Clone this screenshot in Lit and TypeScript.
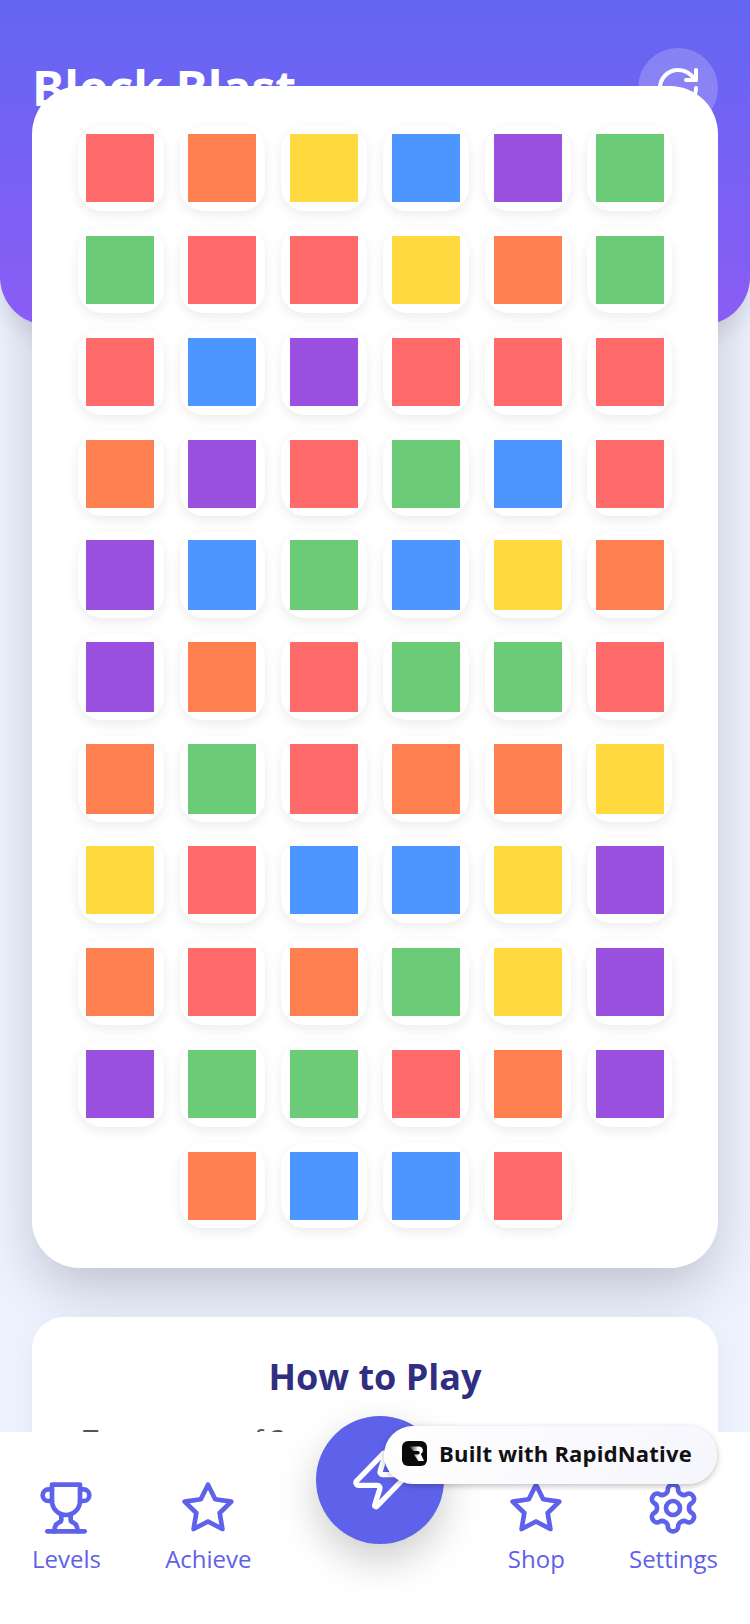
import { LitElement, html, css, svg } from 'lit';
import { customElement } from 'lit/decorators.js';
import { classMap } from 'lit/directives/class-map.js';

const COLORS: Record<string, string> = {
  R: '#ff6b6b',
  O: '#ff7f50',
  Y: '#ffd93d',
  B: '#4d96ff',
  P: '#9b51e0',
  G: '#6bcb77',
};

const ROWS = [
  'ROYBPG',
  'GRRYOG',
  'RBPRRR',
  'OPRGBR',
  'PBGBYO',
  'PORGGR',
  'OGROOY',
  'YRBBYP',
  'OROGYP',
  'PGGROP',
  'OBBR',
];

// these three rows come out a little taller in the reference
const TALL_ROWS = [4, 5, 6];

const trophy = svg`
  <path d="M6 9H4.5a2.5 2.5 0 0 1 0-5H6" />
  <path d="M18 9h1.5a2.5 2.5 0 0 0 0-5H18" />
  <path d="M4 22h16" />
  <path d="M10 14.66V17c0 .55-.47.98-.97 1.21C7.85 18.75 7 20.24 7 22" />
  <path d="M14 14.66V17c0 .55.47.98.97 1.21C16.15 18.75 17 20.24 17 22" />
  <path d="M18 2H6v7a6 6 0 0 0 12 0V2Z" />
`;

const star = svg`
  <polygon points="12 2 15.09 8.26 22 9.27 17 14.14 18.18 21.02 12 17.77 5.82 21.02 7 14.14 2 9.27 8.91 8.26 12 2" />
`;

const gear = svg`
  <path d="M12.22 2h-.44a2 2 0 0 0-2 2v.18a2 2 0 0 1-1 1.73l-.43.25a2 2 0 0 1-2 0l-.15-.08a2 2 0 0 0-2.73.73l-.22.38a2 2 0 0 0 .73 2.73l.15.1a2 2 0 0 1 1 1.72v.51a2 2 0 0 1-1 1.74l-.15.09a2 2 0 0 0-.73 2.73l.22.38a2 2 0 0 0 2.73.73l.15-.08a2 2 0 0 1 2 0l.43.25a2 2 0 0 1 1 1.73V20a2 2 0 0 0 2 2h.44a2 2 0 0 0 2-2v-.18a2 2 0 0 1 1-1.73l.43-.25a2 2 0 0 1 2 0l.15.08a2 2 0 0 0 2.73-.73l.22-.39a2 2 0 0 0-.73-2.73l-.15-.08a2 2 0 0 1-1-1.74v-.5a2 2 0 0 1 1-1.74l.15-.09a2 2 0 0 0 .73-2.73l-.22-.38a2 2 0 0 0-2.73-.73l-.15.08a2 2 0 0 1-2 0l-.43-.25a2 2 0 0 1-1-1.73V4a2 2 0 0 0-2-2z" />
  <circle cx="12" cy="12" r="3" />
`;

const zap = svg`
  <path d="M4 14a1 1 0 0 1-.78-1.63l9.9-10.2a.5.5 0 0 1 .86.46l-1.92 6.02A1 1 0 0 0 13 10h7a1 1 0 0 1 .78 1.63l-9.9 10.2a.5.5 0 0 1-.86-.46l1.92-6.02A1 1 0 0 0 11 14z" />
`;

const rotate = svg`
  <path d="M21 12a9 9 0 1 1-9-9c2.52 0 4.93 1 6.74 2.74L21 8" />
  <path d="M21 3v5h-5" />
`;

@customElement('app-root')
export class AppRoot extends LitElement {
  static styles = css`
    :host {
      display: block;
      position: relative;
      width: 750px;
      height: 1624px;
      overflow: hidden;
      background: #eef2ff;
      font-family: 'Open Sans', sans-serif;
    }

    svg {
      display: block;
      fill: none;
      stroke: currentColor;
      stroke-width: 2;
      stroke-linecap: round;
      stroke-linejoin: round;
    }

    .header {
      position: relative;
      z-index: 1;
      height: 325px;
      box-sizing: border-box;
      padding: 48px 32px 0;
      display: flex;
      justify-content: space-between;
      align-items: flex-start;
      border-radius: 0 0 48px 48px;
      background: linear-gradient(180deg, #6366f1, #8b5cf6);
      box-shadow: 0 8px 24px rgba(0, 0, 0, 0.12);
    }

    .title {
      margin: 0;
      font-size: 48px;
      line-height: 80px;
      font-weight: 700;
      color: #fff;
    }

    .refresh {
      width: 80px;
      height: 80px;
      border-radius: 50%;
      background: rgba(255, 255, 255, 0.2);
      color: #fff;
      display: flex;
      align-items: center;
      justify-content: center;
    }

    .main {
      margin-top: -239px;
      padding: 0 32px;
      display: flex;
      flex-direction: column;
      gap: 49px;
    }

    /* the card sits over the header but its shadow stays behind it */
    .board-wrap {
      position: relative;
    }

    .board-wrap::before {
      content: '';
      position: absolute;
      inset: 0;
      border-radius: 48px;
      box-shadow: 0 24px 56px -4px rgba(0, 0, 0, 0.2);
    }

    .board {
      position: relative;
      z-index: 2;
      box-sizing: border-box;
      padding: 39.54px 45.68px 39.24px 46px;
      display: flex;
      flex-wrap: wrap;
      justify-content: center;
      gap: 16px;
      background: #fff;
      border-radius: 48px;
    }

    .tile {
      width: 85.72px;
      height: 85.72px;
      display: flex;
      align-items: center;
      background: #fff;
      border-radius: 24px;
      box-shadow: 0 4px 12px rgba(0, 0, 0, 0.08);
    }

    .block {
      width: 68px;
      height: 68px;
      flex: none;
    }

    .block.tall {
      height: 70px;
    }

    .help {
      position: relative;
      padding: 38px 48px 40px;
      background: #fff;
      border-radius: 32px;
      box-shadow: 0 8px 32px rgba(0, 0, 0, 0.05);
    }

    .help h2 {
      margin: 0 0 20px;
      font-size: 36px;
      line-height: 44px;
      font-weight: 700;
      color: #312e81;
      text-align: center;
    }

    .help p {
      margin: 0;
      padding-left: 3px;
      font-size: 28px;
      line-height: 40px;
      color: #4b5563;
    }

    .nav {
      position: absolute;
      z-index: 3;
      left: 0;
      right: 0;
      bottom: 0;
      height: 192px;
      box-sizing: border-box;
      padding: 48px 32px 0;
      display: flex;
      justify-content: space-between;
      align-items: flex-start;
      background: #fff;
      color: #5e62ea;
    }

    .nav-item {
      display: flex;
      flex-direction: column;
      align-items: center;
      gap: 6px;
      font-size: 24px;
      line-height: 34px;
    }

    .fab {
      width: 128px;
      height: 128px;
      margin-top: -64px;
      border-radius: 50%;
      background: #5e62ea;
      color: #fff;
      display: flex;
      align-items: center;
      justify-content: center;
      box-shadow: 0 16px 40px rgba(0, 0, 0, 0.2);
    }

    .badge {
      position: absolute;
      z-index: 4;
      left: 384px;
      top: 1426px;
      width: 333px;
      height: 58px;
      box-sizing: border-box;
      padding: 0 0 4px 18px;
      display: flex;
      align-items: center;
      gap: 12px;
      border-radius: 29px;
      background: linear-gradient(135deg, #fff, #f5f5fd);
      box-shadow: 0 2px 6px rgba(0, 0, 0, 0.25);
      color: #111;
      font-size: 22px;
      letter-spacing: 0.2px;
      font-weight: 700;
      white-space: nowrap;
    }

    .logo {
      width: 25px;
      height: 25px;
      flex: none;
      stroke: none;
    }
  `;

  render() {
    return html`
      <div class="header">
        <h1 class="title">Block Blast</h1>
        <div class="refresh">
          <svg width="48" height="48" viewBox="0 0 24 24">${rotate}</svg>
        </div>
      </div>

      <div class="main">
        <div class="board-wrap">
          <div class="board">
            ${ROWS.map((row, i) => {
              // the short last row is centred, so it starts one column in
              const first = (6 - row.length) / 2;
              return row.split('').map((c, j) => {
                // blocks step 102px while tiles step 101.72px
                const inset = 8 + 0.28 * (j + first);
                return html`
                  <div class="tile">
                    <div
                      class=${classMap({ block: true, tall: TALL_ROWS.includes(i) })}
                      style="background:${COLORS[c]};margin-left:${inset}px"
                    ></div>
                  </div>
                `;
              });
            })}
          </div>
        </div>

        <div class="help">
          <h2>How to Play</h2>
          <p>Tap groups of 3 or more</p>
        </div>
      </div>

      <div class="nav">
        ${this._navItem(trophy, 'Levels')}
        ${this._navItem(star, 'Achieve')}
        <div class="fab">
          <svg width="64" height="64" viewBox="0 0 24 24">${zap}</svg>
        </div>
        ${this._navItem(star, 'Shop')}
        ${this._navItem(gear, 'Settings')}
      </div>

      <div class="badge">
        <svg class="logo" viewBox="0 0 25 25">
          <defs>
            <linearGradient id="logo-r" x1="0" y1="0" x2="1" y2="0">
              <stop offset="0.1" stop-color="#333" />
              <stop offset="0.6" stop-color="#fff" />
            </linearGradient>
          </defs>
          <rect width="25" height="25" rx="6" fill="#0a0a0a" />
          <path
            d="M7 5.5h10a4 4 0 0 1 1.8 7.5L22 20h-5.5l-4.6-6.5H16a1.7 1.7 0 0 0 0-3.4h-4.5z"
            fill="url(#logo-r)"
          />
        </svg>
        Built with RapidNative
      </div>
    `;
  }

  private _navItem(icon: unknown, label: string) {
    return html`
      <div class="nav-item">
        <svg width="56" height="56" viewBox="0 0 24 24">${icon}</svg>
        <span>${label}</span>
      </div>
    `;
  }
}
